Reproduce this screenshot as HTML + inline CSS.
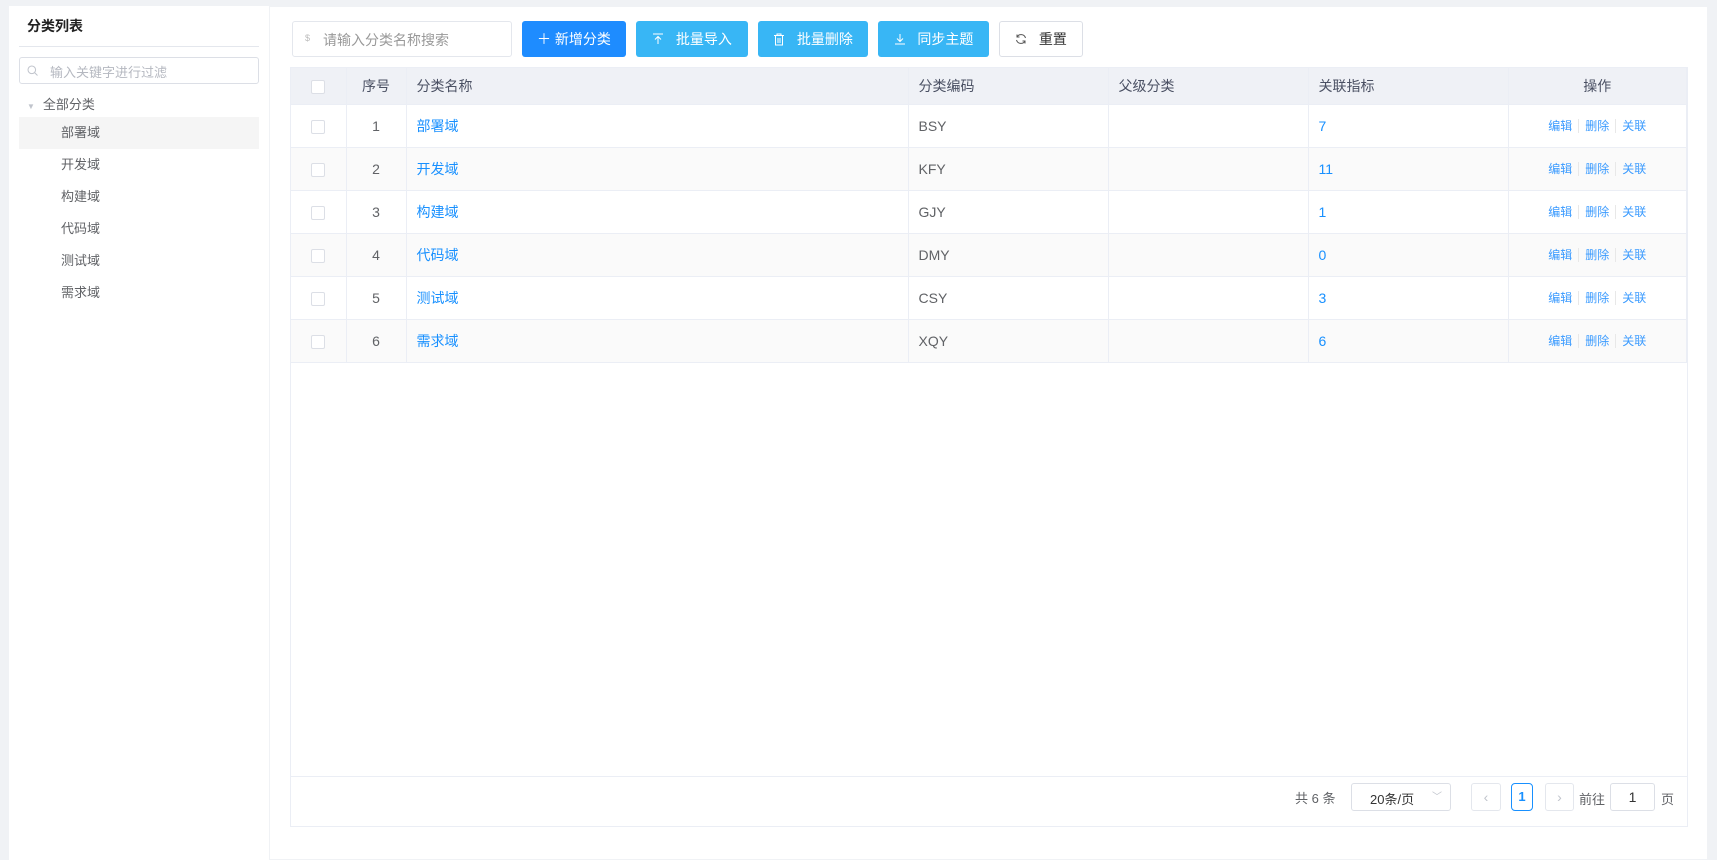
<!DOCTYPE html>
<html><head><meta charset="utf-8"><style>
*{box-sizing:border-box;margin:0;padding:0}
body{width:1717px;height:860px;background:#f0f2f5;font-family:"Liberation Sans","Noto Sans CJK SC",sans-serif;font-size:14px;color:#606266;position:relative;overflow:hidden}
.abs{position:absolute}
.left{left:9px;top:6px;width:260px;height:854px;background:#fff}
.main{left:270px;top:7px;width:1437px;height:852px;background:#fff}
.btn{position:absolute;top:21px;height:36px;border-radius:3px;color:#fff;font-size:14px;display:flex;align-items:center;justify-content:center;gap:8px}
.tb{position:absolute;left:290px;top:67px;width:1398px;height:760px;border:1px solid #ebeef5}
table{border-collapse:collapse;width:100%;table-layout:fixed}
td,th{border-right:1px solid #ebeef5;border-bottom:1px solid #ebeef5;height:43px;padding:0 10px;text-align:left;font-weight:normal}
th{background:#eff1f6;color:#4a5063;font-weight:normal;height:36px}
tr.s td{background:#fafafa}
.cb{display:inline-block;width:14px;height:14px;border:1px solid #dcdfe6;border-radius:2px;background:#fff;vertical-align:middle}
.c{text-align:center}
a{color:#1890ff;text-decoration:none}
.ops{font-size:12px;color:#3b9bff}
.ops span{padding:0 6px;border-left:1px solid #e8e8e8}
.ops span:first-child{border-left:none}
.tree div{position:absolute;left:10px;width:240px;height:32px;line-height:32px;padding-left:42px;font-size:13px;color:#606266}
</style></head><body>
<div class="abs left">
  <div class="abs" style="left:18px;top:10px;font-size:14px;font-weight:bold;color:#222">分类列表</div>
  <div class="abs" style="left:10px;top:40px;width:240px;height:1px;background:#e4e7ed"></div>
  <div class="abs" style="left:10px;top:51px;width:240px;height:27px;border:1px solid #dcdfe6;border-radius:3px">
    <svg class="abs" style="left:7px;top:7px" width="11" height="11" viewBox="0 0 11 11"><circle cx="4.8" cy="4.8" r="3.8" fill="none" stroke="#c0c4cc" stroke-width="1"/><path d="M7.6 7.6L10.5 10.5" stroke="#c0c4cc" stroke-width="1"/></svg>
    <span class="abs" style="left:30px;top:4px;font-size:13px;color:#b5b8c0">输入关键字进行过滤</span>
  </div>
  <div class="abs" style="left:18px;top:88px;font-size:13px;color:#606266"><span style="font-size:8px;color:#c0c4cc;margin-right:8px">▼</span>全部分类</div>
  <div class="tree">
    <div style="top:111px;background:#f5f5f5">部署域</div>
    <div style="top:143px">开发域</div>
    <div style="top:175px">构建域</div>
    <div style="top:207px">代码域</div>
    <div style="top:239px">测试域</div>
    <div style="top:271px">需求域</div>
  </div>
</div>
<div class="abs main"></div>
<div class="abs" style="left:292px;top:21px;width:220px;height:36px;border:1px solid #e4e7ed;border-radius:3px">
  <span class="abs" style="left:12px;top:11px;font-size:9px;color:#bbb">$</span>
  <span class="abs" style="left:30px;top:8px;color:#999;font-size:14px">请输入分类名称搜索</span>
</div>
<div class="btn" style="left:522px;width:104px;background:#1e8cff">＋ 新增分类</div>
<div class="btn" style="left:636px;width:112px;background:#38b6f5"><svg width="12" height="12" viewBox="0 0 12 12"><path d="M6 11V4M3 6.5L6 3.5 9 6.5M1 1h10" fill="none" stroke="#fff" stroke-width="1"/></svg>&nbsp;批量导入</div>
<div class="btn" style="left:758px;width:110px;background:#38b6f5"><svg width="12" height="13" viewBox="0 0 12 13"><path d="M1 2.5h10M4 2.5V1h4v1.5M2.5 2.5v9.5h7V2.5M5 5v5M7 5v5" fill="none" stroke="#fff" stroke-width="1"/></svg>&nbsp;批量删除</div>
<div class="btn" style="left:878px;width:111px;background:#38b6f5"><svg width="12" height="12" viewBox="0 0 12 12"><path d="M6 1v7M3 5.5L6 8.5 9 5.5M1 11h10" fill="none" stroke="#fff" stroke-width="1"/></svg>&nbsp;同步主题</div>
<div class="btn" style="left:999px;width:84px;background:#fff;border:1px solid #dcdfe6;color:#333"><svg width="12" height="12" viewBox="0 0 12 12"><path d="M10.5 5A4.6 4.6 0 0 0 2 4M1.5 7A4.6 4.6 0 0 0 10 8" fill="none" stroke="#555" stroke-width="1"/><path d="M2 1.5V4h2.5M10 10.5V8H7.5" fill="none" stroke="#555" stroke-width="1"/></svg>&nbsp;重置</div>
<div class="tb">
<table>
<colgroup><col style="width:55px"><col style="width:60px"><col style="width:502px"><col style="width:200px"><col style="width:200px"><col style="width:200px"><col></colgroup>
<tr><th class="c"><span class="cb"></span></th><th class="c">序号</th><th>分类名称</th><th>分类编码</th><th>父级分类</th><th>关联指标</th><th class="c">操作</th></tr>
<tr><td class="c"><span class="cb"></span></td><td class="c">1</td><td><a>部署域</a></td><td>BSY</td><td></td><td><a>7</a></td><td class="c ops"><span>编辑</span><span>删除</span><span>关联</span></td></tr>
<tr class="s"><td class="c"><span class="cb"></span></td><td class="c">2</td><td><a>开发域</a></td><td>KFY</td><td></td><td><a>11</a></td><td class="c ops"><span>编辑</span><span>删除</span><span>关联</span></td></tr>
<tr><td class="c"><span class="cb"></span></td><td class="c">3</td><td><a>构建域</a></td><td>GJY</td><td></td><td><a>1</a></td><td class="c ops"><span>编辑</span><span>删除</span><span>关联</span></td></tr>
<tr class="s"><td class="c"><span class="cb"></span></td><td class="c">4</td><td><a>代码域</a></td><td>DMY</td><td></td><td><a>0</a></td><td class="c ops"><span>编辑</span><span>删除</span><span>关联</span></td></tr>
<tr><td class="c"><span class="cb"></span></td><td class="c">5</td><td><a>测试域</a></td><td>CSY</td><td></td><td><a>3</a></td><td class="c ops"><span>编辑</span><span>删除</span><span>关联</span></td></tr>
<tr class="s"><td class="c"><span class="cb"></span></td><td class="c">6</td><td><a>需求域</a></td><td>XQY</td><td></td><td><a>6</a></td><td class="c ops"><span>编辑</span><span>删除</span><span>关联</span></td></tr>
</table>
<div class="abs" style="left:0;top:708px;width:100%;height:1px;background:#ebeef5"></div>
</div>
<div class="abs" style="left:1295px;top:788px;font-size:13px;color:#606266">共 6 条</div>
<div class="abs" style="left:1351px;top:783px;width:100px;height:28px;border:1px solid #dcdfe6;border-radius:3px;font-size:13px;color:#333;padding:5px 0 0 18px">20条/页<span class="abs" style="right:8px;top:4px;color:#c0c4cc;font-size:10px">﹀</span></div>
<div class="abs" style="left:1471px;top:783px;width:30px;height:28px;border:1px solid #e4e7ed;border-radius:3px;color:#c0c4cc;text-align:center;line-height:26px">‹</div>
<div class="abs" style="left:1511px;top:783px;width:22px;height:28px;border:1px solid #1890ff;border-radius:4px;color:#1890ff;font-weight:bold;text-align:center;line-height:26px;font-size:13px">1</div>
<div class="abs" style="left:1545px;top:783px;width:29px;height:28px;border:1px solid #e4e7ed;border-radius:3px;color:#c0c4cc;text-align:center;line-height:26px">›</div>
<div class="abs" style="left:1579px;top:789px;font-size:13px">前往</div>
<div class="abs" style="left:1610px;top:783px;width:45px;height:28px;border:1px solid #dcdfe6;border-radius:3px;text-align:center;line-height:26px;color:#333">1</div>
<div class="abs" style="left:1661px;top:789px;font-size:13px">页</div>
</body></html>
